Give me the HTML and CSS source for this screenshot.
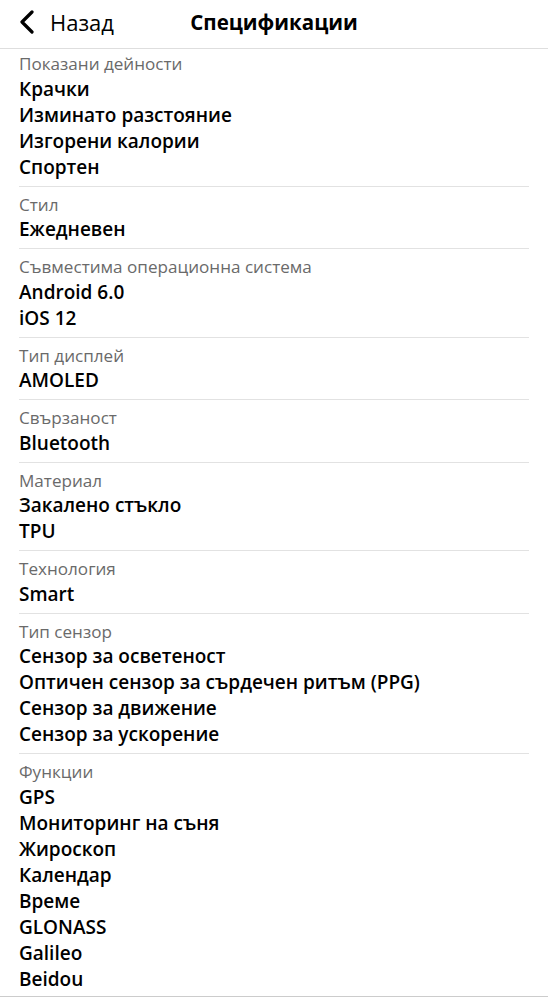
FILE: index.html
```html
<!DOCTYPE html>
<html lang="bg">
<head>
<meta charset="utf-8">
<link rel="stylesheet" href="styles.css">
</head>
<body>
<header class="topbar">
  <a class="back">
    <svg class="chev" width="16" height="24" viewBox="0 0 16 24"><path d="M13 2 L3 12 L13 22" fill="none" stroke="#000" stroke-width="3.2" stroke-linecap="round" stroke-linejoin="round"/></svg>
    <span>Назад</span>
  </a>
  <h1 class="title">Спецификации</h1>
</header>
<main class="specs">
  <section class="group first">
    <div class="label">Показани дейности</div>
    <div class="value">Крачки</div>
    <div class="value">Изминато разстояние</div>
    <div class="value">Изгорени калории</div>
    <div class="value">Спортен</div>
  </section>
  <section class="group">
    <div class="label">Стил</div>
    <div class="value">Ежедневен</div>
  </section>
  <section class="group">
    <div class="label">Съвместима операционна система</div>
    <div class="value">Android 6.0</div>
    <div class="value">iOS 12</div>
  </section>
  <section class="group">
    <div class="label">Тип дисплей</div>
    <div class="value">AMOLED</div>
  </section>
  <section class="group">
    <div class="label">Свързаност</div>
    <div class="value">Bluetooth</div>
  </section>
  <section class="group">
    <div class="label">Материал</div>
    <div class="value">Закалено стъкло</div>
    <div class="value">TPU</div>
  </section>
  <section class="group">
    <div class="label">Технология</div>
    <div class="value">Smart</div>
  </section>
  <section class="group">
    <div class="label">Тип сензор</div>
    <div class="value">Сензор за осветеност</div>
    <div class="value">Оптичен сензор за сърдечен ритъм (PPG)</div>
    <div class="value">Сензор за движение</div>
    <div class="value">Сензор за ускорение</div>
  </section>
  <section class="group">
    <div class="label">Функции</div>
    <div class="value">GPS</div>
    <div class="value">Мониторинг на съня</div>
    <div class="value">Жироскоп</div>
    <div class="value">Календар</div>
    <div class="value">Време</div>
    <div class="value">GLONASS</div>
    <div class="value">Galileo</div>
    <div class="value">Beidou</div>
    <div class="value">QZSS</div>
  </section>
</main>
<div class="bottombar"></div>
</body>
</html>
```
FILE: styles.css
```css
html, body {
  margin: 0;
  padding: 0;
  background: #fff;
}
body {
  font-family: "Open Sans", "Noto Sans", sans-serif;
  color: #000;
  height: 999px;
  overflow: hidden;
}
.topbar {
  position: relative;
  height: 48px;
  border-bottom: 1px solid #dedede;
  display: flex;
  align-items: center;
  justify-content: center;
}
.back {
  position: absolute;
  left: 19px;
  top: 0;
  height: 43px;
  display: flex;
  align-items: center;
  gap: 15px;
  font-size: 22px;
  color: #000;
}
.chev {
  display: block;
}
.title {
  margin: 0;
  margin-top: -5px;
  font-size: 20.5px;
  font-weight: 700;
}
.specs {
  padding: 0 19px;
}
.group {
  padding: 7px 0 6px;
  border-bottom: 1px solid #e2e2e2;
}
.group.first {
  padding-top: 4px;
}
.label {
  font-size: 17.1px;
  line-height: 22.5px;
  color: #6a6a6a;
}
.value {
  font-size: 19px;
  line-height: 26px;
  font-weight: 600;
}
.bottombar {
  position: fixed;
  left: 0;
  right: 0;
  bottom: 0;
  height: 2px;
  background: #fff;
  border-top: 1px solid #cccccc;
}
```
